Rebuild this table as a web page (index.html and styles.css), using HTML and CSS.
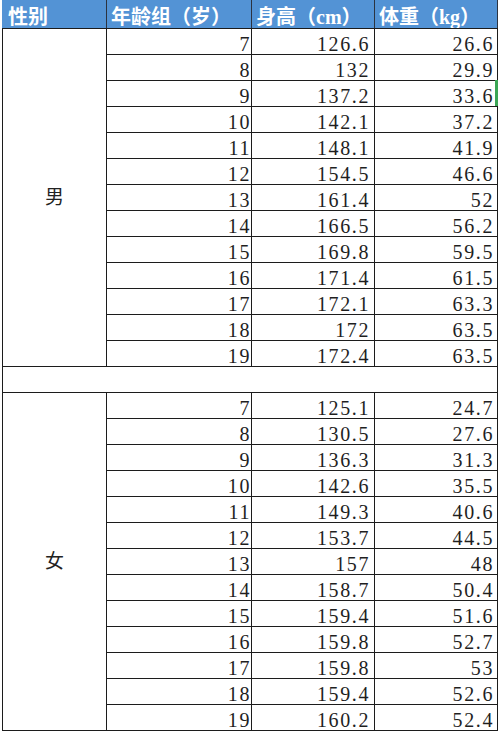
FILE: index.html
```html
<!DOCTYPE html>
<html lang="zh-CN">
<head>
<meta charset="utf-8">
<title>儿童青少年身高体重</title>
<link rel="stylesheet" href="styles.css">
</head>
<body>
<div class="page">
<table class="sheet">
  <colgroup>
    <col class="c-sex"><col class="c-age"><col class="c-h"><col class="c-w">
  </colgroup>
  <thead>
    <tr class="head"><th>性别</th><th>年龄组（岁）</th><th>身高（cm）</th><th>体重（kg）</th></tr>
  </thead>
  <tbody>
    <tr class="row"><td rowspan="13" class="sex">男</td><td class="age">7</td><td class="h">126.6</td><td class="w">26.6</td></tr>
    <tr class="row"><td class="age">8</td><td class="h">132</td><td class="w">29.9</td></tr>
    <tr class="row"><td class="age">9</td><td class="h">137.2</td><td class="w">33.6</td></tr>
    <tr class="row"><td class="age">10</td><td class="h">142.1</td><td class="w">37.2</td></tr>
    <tr class="row"><td class="age">11</td><td class="h">148.1</td><td class="w">41.9</td></tr>
    <tr class="row"><td class="age">12</td><td class="h">154.5</td><td class="w">46.6</td></tr>
    <tr class="row"><td class="age">13</td><td class="h">161.4</td><td class="w">52</td></tr>
    <tr class="row"><td class="age">14</td><td class="h">166.5</td><td class="w">56.2</td></tr>
    <tr class="row"><td class="age">15</td><td class="h">169.8</td><td class="w">59.5</td></tr>
    <tr class="row"><td class="age">16</td><td class="h">171.4</td><td class="w">61.5</td></tr>
    <tr class="row"><td class="age">17</td><td class="h">172.1</td><td class="w">63.3</td></tr>
    <tr class="row"><td class="age">18</td><td class="h">172</td><td class="w">63.5</td></tr>
    <tr class="row"><td class="age">19</td><td class="h">172.4</td><td class="w">63.5</td></tr>
    <tr class="row gap"><td colspan="4"></td></tr>
    <tr class="row"><td rowspan="13" class="sex">女</td><td class="age">7</td><td class="h">125.1</td><td class="w">24.7</td></tr>
    <tr class="row"><td class="age">8</td><td class="h">130.5</td><td class="w">27.6</td></tr>
    <tr class="row"><td class="age">9</td><td class="h">136.3</td><td class="w">31.3</td></tr>
    <tr class="row"><td class="age">10</td><td class="h">142.6</td><td class="w">35.5</td></tr>
    <tr class="row"><td class="age">11</td><td class="h">149.3</td><td class="w">40.6</td></tr>
    <tr class="row"><td class="age">12</td><td class="h">153.7</td><td class="w">44.5</td></tr>
    <tr class="row"><td class="age">13</td><td class="h">157</td><td class="w">48</td></tr>
    <tr class="row"><td class="age">14</td><td class="h">158.7</td><td class="w">50.4</td></tr>
    <tr class="row"><td class="age">15</td><td class="h">159.4</td><td class="w">51.6</td></tr>
    <tr class="row"><td class="age">16</td><td class="h">159.8</td><td class="w">52.7</td></tr>
    <tr class="row"><td class="age">17</td><td class="h">159.8</td><td class="w">53</td></tr>
    <tr class="row"><td class="age">18</td><td class="h">159.4</td><td class="w">52.6</td></tr>
    <tr class="row last"><td class="age">19</td><td class="h">160.2</td><td class="w faded">52.4</td></tr>
  </tbody>
</table>
<div class="cursor"></div>
</div>
</body>
</html>
```
FILE: styles.css
```css
html, body {
  margin: 0;
  padding: 0;
  background: #ffffff;
}

.page {
  position: relative;
  width: 499px;
  height: 735px;
  overflow: hidden;
}

.sheet {
  border-collapse: collapse;
  table-layout: fixed;
  width: 495px;
  margin-left: 2px;
}

.c-sex { width: 104px; }
.c-age { width: 145px; }
.c-h { width: 123px; }
.c-w { width: 123px; }

.head {
  height: 28px;
}

.head th {
  background: #5393d5;
  color: #ffffff;
  text-align: left;
  vertical-align: bottom;
  padding: 0 0 1px 4px;
  font-family: "Liberation Serif", "Noto Sans CJK SC", serif;
  font-weight: bold;
  font-size: 20px;
  line-height: 20px;
  white-space: nowrap;
  overflow: hidden;
  border-top: none;
  border-left: 1px solid #2b3340;
  border-right: 1px solid #2b3340;
  border-bottom: 1px solid #1c1c1c;
}

.head th:first-child {
  border-left: 1px solid #5393d5;
  padding-left: 5px;
}

.row {
  height: 26px;
}

.row td {
  border: 1px solid #1c1c1c;
  padding: 0;
  text-align: right;
  vertical-align: bottom;
  font-family: "Liberation Serif", serif;
  font-size: 20px;
  line-height: 20px;
  letter-spacing: 1.6px;
  color: #1f1f1f;
  white-space: nowrap;
}

.row td.age { padding-right: 0; }
.row td.h { padding-right: 4px; }
.row td.w { padding-right: 3px; }

.row td.sex {
  text-align: center;
  vertical-align: middle;
  font-family: "Noto Sans CJK SC", sans-serif;
  font-size: 19px;
  line-height: 20px;
  letter-spacing: 0;
  color: #222222;
  padding: 0 0 2px 0;
}

.last td.w {
  border-left-style: dashed;
}

.faded {
  color: #6a6a6a;
}

.cursor {
  position: absolute;
  left: 495px;
  top: 80px;
  width: 3px;
  height: 26px;
  background: #3aa655;
}
```
